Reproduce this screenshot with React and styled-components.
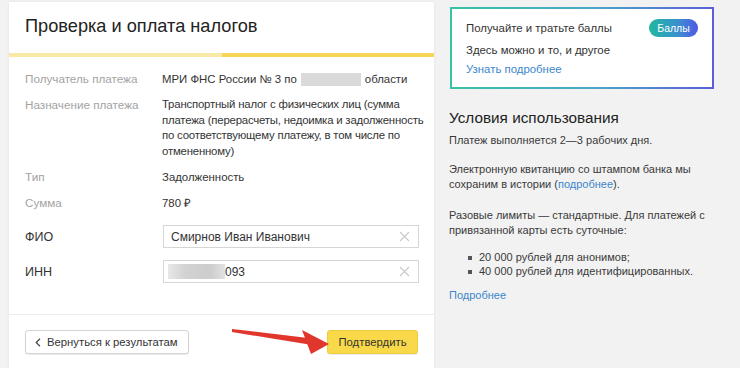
import React from "react";
import styled, { createGlobalStyle } from "styled-components";

const Global = createGlobalStyle`
  html, body { margin: 0; padding: 0; }
  body {
    background: #f2f2f2;
    font-family: "Liberation Sans", Arial, sans-serif;
    color: #333;
    overflow: hidden;
  }
`;

const Page = styled.div`
  display: flex;
  align-items: flex-start;
  gap: 15px;
  padding: 2px 0 0 9px;
`;

const Card = styled.div`
  width: 425px;
  min-height: 380px;
  background: #fff;
  box-shadow: 0 0 3px rgba(0, 0, 0, 0.07);
`;

const Header = styled.div`
  padding: 11px 16px 14px;
`;

const Title = styled.h1`
  margin: 0;
  font-size: 18.2px;
  line-height: 26px;
  font-weight: normal;
  color: #222;
`;

const Progress = styled.div`
  display: flex;
  height: 4px;
`;

const Segment = styled.div`
  flex: 1;
  background: ${(p) => (p.$active ? "#f6d654" : "#f9e9a6")};
`;

const Body = styled.div`
  display: flex;
  flex-direction: column;
  gap: 10px;
  padding: 14px 4px 31px 16px;
`;

const Row = styled.div`
  display: grid;
  grid-template-columns: 137px 1fr;
  align-items: ${(p) => (p.$field ? "center" : "start")};
  margin-top: ${(p) => (p.$first ? "4px" : "0")};
  margin-bottom: ${(p) => (p.$first ? "2px" : "0")};
`;

const Label = styled.div`
  font-size: ${(p) => (p.$dark ? "12.5px" : "11.7px")};
  line-height: 16px;
  color: ${(p) => (p.$dark ? "#333" : "#a3a3a3")};
`;

const Value = styled.div`
  font-size: 11.4px;
  line-height: ${(p) => (p.$multi ? "15.5px" : "16px")};
  letter-spacing: ${(p) => (p.$multi ? "-0.2px" : "0")};
  white-space: ${(p) => (p.$multi ? "nowrap" : "normal")};
  color: #333;
`;

const Redact = styled.span`
  display: inline-block;
  width: ${(p) => p.$w}px;
  height: ${(p) => p.$h}px;
  vertical-align: middle;
  margin: 0 ${(p) => p.$mx || 0}px;
  background: ${(p) =>
    p.$soft
      ? "linear-gradient(90deg, #e8e8e8 0%, #d2d2d2 30%, #cdcdcd 75%, #e2e2e2 100%)"
      : "#dadada"};
  filter: blur(0.6px);
`;

const Field = styled.div`
  box-sizing: border-box;
  width: 256px;
  height: 23px;
  border: 1px solid #d6d6d6;
  display: flex;
  align-items: center;
  padding: 0 8px 0 7px;
  font-size: 12px;
  color: #333;
  margin-left: 1px;
`;

const FieldText = styled.div`
  flex: 1;
  display: flex;
  align-items: center;
`;

const Footer = styled.div`
  position: relative;
  border-top: 1px solid #ececec;
  padding: 15px 16px;
  display: flex;
  justify-content: space-between;
  align-items: center;
`;

const Button = styled.button`
  box-sizing: border-box;
  height: 24px;
  display: inline-flex;
  align-items: center;
  gap: 6px;
  font-family: inherit;
  font-size: 11.3px;
  white-space: nowrap;
  color: #333;
  border-radius: 3px;
  cursor: pointer;
  padding: ${(p) => (p.$primary ? "0 6px" : "0 8px 0 9px")};
  width: ${(p) => (p.$primary ? "91px" : "164px")};
  justify-content: ${(p) => (p.$primary ? "center" : "flex-start")};
  background: ${(p) => (p.$primary ? "#f9d949" : "#fff")};
  border: 1px solid ${(p) => (p.$primary ? "#f0cd3c" : "#d3d3d3")};
  box-shadow: 0 1px 1px rgba(0, 0, 0, 0.08);
`;

const ArrowSvg = styled.svg`
  position: absolute;
  left: 220px;
  top: 9px;
  pointer-events: none;
`;

const Side = styled.div`
  width: 265px;
  display: flex;
  flex-direction: column;
`;

const Promo = styled.div`
  box-sizing: border-box;
  margin: 5px 0 0 1px;
  width: 264px;
  height: 82px;
  border: 2px solid transparent;
  background: linear-gradient(#fff, #fff) padding-box,
    linear-gradient(90deg, #37c3a6 0%, #4aa6c9 55%, #5b5ed8 100%) border-box;
  padding: 11px 14px 10px 14px;
`;

const PromoTop = styled.div`
  display: flex;
  justify-content: space-between;
  align-items: center;
  height: 16px;
`;

const PromoText = styled.div`
  font-size: 11.4px;
  line-height: 16px;
  color: #333;
  margin-top: ${(p) => p.$mt || 0}px;
`;

const Badge = styled.span`
  display: inline-flex;
  align-items: center;
  justify-content: center;
  width: 49px;
  height: 18px;
  border-radius: 9px;
  background: linear-gradient(90deg, #1fb89f 0%, #3b8fd0 60%, #5058e6 100%);
  color: #fff;
  font-size: 10.5px;
`;

const Link = styled.a`
  color: #3b86cc;
  text-decoration: none;
`;

const Heading = styled.h2`
  margin: 19px 0 5px;
  font-size: 15.3px;
  line-height: 20px;
  font-weight: normal;
  color: #222;
`;

const Para = styled.p`
  margin: 0 0 ${(p) => p.$mb ?? 14}px;
  font-size: 11px;
  line-height: 15.5px;
  color: #3a3a3a;
  width: 262px;
`;

const List = styled.ul`
  margin: 0 0 9px;
  padding: 0 0 0 19px;
  list-style: none;
  font-size: 11px;
  line-height: 14.5px;
  color: #3a3a3a;
`;

const Item = styled.li`
  position: relative;
  padding-left: 11px;
  &::before {
    content: "";
    position: absolute;
    left: 0;
    top: 6px;
    width: 4px;
    height: 4px;
    background: #555;
  }
`;

const Cross = () => (
  <svg width="11" height="11" viewBox="0 0 11 11">
    <path d="M1 1L10 10M10 1L1 10" stroke="#c9c9c9" strokeWidth="1.1" />
  </svg>
);

const Chevron = () => (
  <svg width="6" height="9" viewBox="0 0 6 9">
    <path d="M5 0.8L1.2 4.5L5 8.2" stroke="#444" strokeWidth="1.2" fill="none" />
  </svg>
);

export default function App() {
  return (
    <>
      <Global />
      <Page>
        <Card>
          <Header>
            <Title>Проверка и оплата налогов</Title>
          </Header>
          <Progress>
            <Segment />
            <Segment $active />
          </Progress>
          <Body>
            <Row>
              <Label>Получатель платежа</Label>
              <Value>
                МРИ ФНС России № 3 по
                <Redact $w={60} $h={13} $mx={4} />
                области
              </Value>
            </Row>
            <Row>
              <Label>Назначение платежа</Label>
              <Value $multi>
                Транспортный налог с физических лиц (сумма
                <br />
                платежа (перерасчеты, недоимка и задолженность
                <br />
                по соответствующему платежу, в том числе по
                <br />
                отмененному)
              </Value>
            </Row>
            <Row>
              <Label>Тип</Label>
              <Value>Задолженность</Value>
            </Row>
            <Row>
              <Label>Сумма</Label>
              <Value>780 ₽</Value>
            </Row>
            <Row $field $first>
              <Label $dark>ФИО</Label>
              <Field>
                <FieldText>Смирнов Иван Иванович</FieldText>
                <Cross />
              </Field>
            </Row>
            <Row $field>
              <Label $dark>ИНН</Label>
              <Field>
                <FieldText>
                  <Redact $w={57} $h={15} $soft style={{ marginLeft: -3 }} />
                  093
                </FieldText>
                <Cross />
              </Field>
            </Row>
          </Body>
          <Footer>
            <Button>
              <Chevron />
              Вернуться к результатам
            </Button>
            <Button $primary>Подтвердить</Button>
            <ArrowSvg width="110" height="36" viewBox="0 0 110 36">
              <polygon points="3,5 3,8 80,20.5 79,14" fill="#e0362b" />
              <polygon points="73,6 82,30 100,20" fill="#e0362b" />
            </ArrowSvg>
          </Footer>
        </Card>
        <Side>
          <Promo>
            <PromoTop>
              <PromoText>Получайте и тратьте баллы</PromoText>
              <Badge>Баллы</Badge>
            </PromoTop>
            <PromoText $mt={6}>Здесь можно и то, и другое</PromoText>
            <PromoText $mt={3}>
              <Link>Узнать подробнее</Link>
            </PromoText>
          </Promo>
          <Heading>Условия использования</Heading>
          <Para $mb={13}>Платеж выполняется 2—3 рабочих дня.</Para>
          <Para $mb={15}>
            Электронную квитанцию со штампом банка мы сохраним в истории{" "}
            <span>
              (<Link>подробнее</Link>).
            </span>
          </Para>
          <Para $mb={11}>
            Разовые лимиты — стандартные. Для платежей с привязанной карты
            есть суточные:
          </Para>
          <List>
            <Item>20 000 рублей для анонимов;</Item>
            <Item>40 000 рублей для идентифицированных.</Item>
          </List>
          <Para>
            <Link>Подробнее</Link>
          </Para>
        </Side>
      </Page>
    </>
  );
}
